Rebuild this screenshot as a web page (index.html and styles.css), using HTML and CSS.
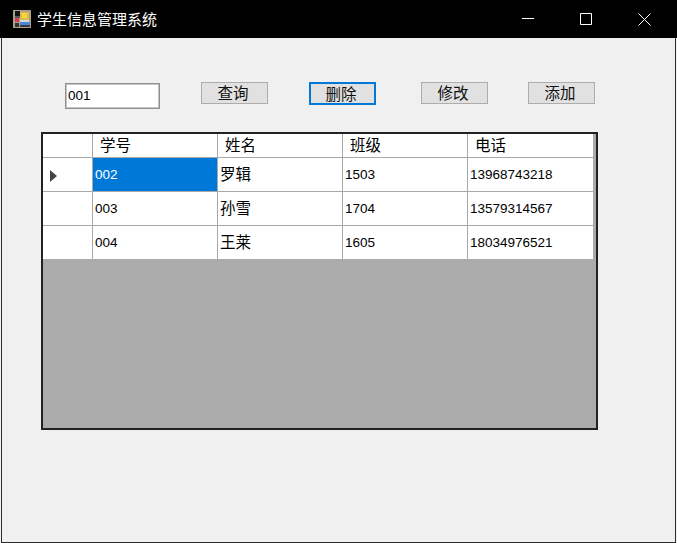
FILE: index.html
```html
<!DOCTYPE html>
<html lang="zh">
<head>
<meta charset="utf-8">
<title>学生信息管理系统</title>
<link rel="stylesheet" href="styles.css">
</head>
<body>
<div class="window">
  <header class="titlebar">
    <svg class="app-icon" width="18" height="18" viewBox="0 0 18 18" shape-rendering="crispEdges">
      <rect width="18" height="18" fill="#a89f8a"/>
      <rect x="2" y="1" width="5" height="5" fill="#141414"/>
      <rect x="7" y="2" width="9" height="8" fill="#e0b84a"/>
      <rect x="9" y="3" width="5" height="5" fill="#f4d83a"/>
      <rect x="2" y="6" width="5" height="2" fill="#5a5a50"/>
      <rect x="2" y="8" width="4" height="4" fill="#d23c58"/>
      <rect x="7" y="10" width="9" height="2" fill="#d8d8d8"/>
      <rect x="7" y="12" width="10" height="3" fill="#4a86d8"/>
      <rect x="2" y="13" width="4" height="4" fill="#333"/>
      <rect x="7" y="15" width="10" height="2" fill="#3a3a3a"/>
    </svg>
    <span class="title">学生信息管理系统</span>
    <div class="caption-buttons">
      <span class="caption-btn">
        <svg width="12" height="12" viewBox="0 0 12 12"><path d="M0 5.5H12" stroke="#fff" fill="none"/></svg>
      </span>
      <span class="caption-btn">
        <svg width="12" height="12" viewBox="0 0 12 12"><path d="M.5 .5H11.5V11.5H.5Z" stroke="#fff" fill="none"/></svg>
      </span>
      <span class="caption-btn">
        <svg width="13" height="13" viewBox="0 0 13 13"><path d="M.5 .5L12.5 12.5M12.5 .5L.5 12.5" stroke="#fff" fill="none"/></svg>
      </span>
    </div>
  </header>
  <main class="client">
    <div class="toolbar">
      <input class="search" type="text" value="001">
      <button class="btn btn-query">查询</button>
      <button class="btn btn-delete">删除</button>
      <button class="btn btn-edit">修改</button>
      <button class="btn btn-add">添加</button>
    </div>
    <section class="grid">
      <table class="data">
        <thead>
          <tr><th class="rowhead"></th><th>学号</th><th>姓名</th><th>班级</th><th>电话</th></tr>
        </thead>
        <tbody>
          <tr>
            <td class="rowhead"><span class="arrow"></span></td>
            <td class="selected">002</td><td class="cjk">罗辑</td><td>1503</td><td>13968743218</td>
          </tr>
          <tr>
            <td class="rowhead"></td>
            <td>003</td><td class="cjk">孙雪</td><td>1704</td><td>13579314567</td>
          </tr>
          <tr>
            <td class="rowhead"></td>
            <td>004</td><td class="cjk">王莱</td><td>1605</td><td>18034976521</td>
          </tr>
        </tbody>
      </table>
    </section>
  </main>
</div>
</body>
</html>
```
FILE: styles.css
```css
* { box-sizing: border-box; }
html, body { margin: 0; height: 100%; }
body {
  width: 677px;
  height: 543px;
  overflow: hidden;
  background: #f4f4f4;
  font-family: "Liberation Sans", "Noto Sans CJK SC", sans-serif;
}
.window {
  width: 675px;
  height: 543px;
  margin-left: 1px;
  display: flex;
  flex-direction: column;
  background: #f0f0f0;
  border: 1px solid #2a2a2a;
  border-top: 0;
}
.titlebar {
  height: 38px;
  margin: 0 -2px;
  flex: none;
  display: flex;
  align-items: center;
  background: #000;
  color: #fff;
  padding: 0 3px 0 13px;
}
.app-icon { flex: none; margin-right: 6px; }
.title {
  font-family: "Noto Sans CJK SC", sans-serif;
  font-size: 15px;
  line-height: 20px;
}
.caption-buttons { margin-left: auto; display: flex; }
.caption-btn {
  width: 58.5px;
  height: 38px;
  display: flex;
  align-items: center;
  justify-content: center;
}
.client {
  flex: 1;
  padding: 44px 0 0 39px;
}
.toolbar {
  display: flex;
  align-items: flex-start;
  padding-left: 24px;
  height: 50px;
}
.search {
  width: 95px;
  height: 26px;
  margin: 1px 41px 0 0;
  padding: 0 2px 2px;
  border: 1px solid #8f8f8f;
  box-shadow: inset 0 0 0 1px #c4c4c4;
  background: #fff;
  color: #000;
  font: 13.5px "Liberation Sans", sans-serif;
  outline: 0;
}
.btn {
  width: 67px;
  height: 22px;
  padding: 0 3px 2px 0;
  background: #e1e1e1;
  border: 1px solid #adadad;
  color: #111;
  font: 15.5px/18px "Noto Sans CJK SC", sans-serif;
}
.btn-query { margin-right: 41px; }
.btn-delete {
  height: 23px;
  margin-right: 45px;
  border: 2px solid #0078d7;
}
.btn-edit { margin-right: 40px; }
.grid {
  width: 557px;
  height: 298px;
  background: #ababab;
  border: 2px solid #222;
}
.data {
  border-collapse: separate;
  border-spacing: 0;
  table-layout: fixed;
  width: 550px;
  background: #fff;
  color: #000;
  font-size: 13.5px;
}
.data th, .data td {
  padding: 0 0 0 2px;
  border-right: 1px solid #a8a8a8;
  border-bottom: 1px solid #a8a8a8;
  text-align: left;
  overflow: hidden;
  white-space: nowrap;
}
.data th:last-child, .data td:last-child { border-right: 0; }
.data th {
  height: 24px;
  padding: 0 0 3px 7px;
  font: 400 15.5px/20px "Noto Sans CJK SC", sans-serif;
}
.data td { height: 34px; }
.data tbody tr:last-child td { height: 33px; border-bottom: 0; }
.data .rowhead { width: 50px; }
.data .cjk {
  padding-bottom: 3px;
  font: 15.5px/20px "Noto Sans CJK SC", sans-serif;
}
.data .selected { background: #0078d7; color: #fff; }
.data td.rowhead { padding-left: 7px; }
.arrow {
  display: block;
  width: 0;
  height: 0;
  margin-top: 3px;
  border-style: solid;
  border-width: 6px 0 6px 7px;
  border-color: transparent transparent transparent #444;
}
```
